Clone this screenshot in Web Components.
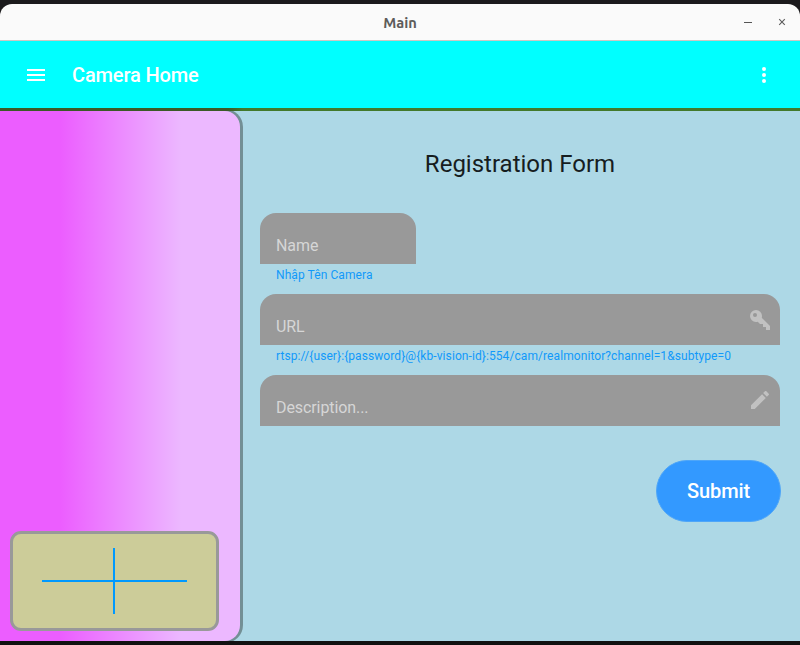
<!DOCTYPE html>
<html lang="vi">
<head>
<meta charset="utf-8">
<title>Main</title>
<style>
html,body{margin:0;height:100%;background:#1b1a1c;overflow:hidden}
</style>
</head>
<body>
<camera-window></camera-window>
<script>
function define(name, html, setup) {
  const t = document.createElement('template');
  t.innerHTML = html;
  customElements.define(name, class extends HTMLElement {
    constructor() {
      super();
      this.attachShadow({ mode: 'open' }).append(t.content.cloneNode(true));
    }
    connectedCallback() { if (setup) setup(this, this.shadowRoot); }
  });
}

const ICONS = {
  menu: 'M3,6H21V8H3V6M3,11H21V13H3V11M3,16H21V18H3V16Z',
  dots: 'M12,16A2,2 0 0,1 14,18A2,2 0 0,1 12,20A2,2 0 0,1 10,18A2,2 0 0,1 12,16M12,10A2,2 0 0,1 14,12A2,2 0 0,1 12,14A2,2 0 0,1 10,12A2,2 0 0,1 12,10M12,4A2,2 0 0,1 14,6A2,2 0 0,1 12,8A2,2 0 0,1 10,6A2,2 0 0,1 12,4Z',
  key: 'M22,18V22H18V19H15V16H12L9.74,13.74C9.19,13.91 8.61,14 8,14A6,6 0 0,1 2,8A6,6 0 0,1 8,2A6,6 0 0,1 14,8C14,8.61 13.91,9.19 13.74,9.74L22,18M7,5A2,2 0 0,0 5,7A2,2 0 0,0 7,9A2,2 0 0,0 9,7A2,2 0 0,0 7,5Z',
  pencil: 'M20.71,7.04C21.1,6.65 21.1,6 20.71,5.63L18.37,3.29C18,2.9 17.35,2.9 16.96,3.29L15.12,5.12L18.87,8.87M3,17.25V21H6.75L17.81,9.93L14.06,6.18L3,17.25Z'
};

define('md-icon', `
<style>:host{display:block;width:24px;height:24px}svg{display:block}</style>
<svg width="24" height="24" viewBox="0 0 24 24" fill="currentColor"><path/></svg>`,
(el, r) => r.querySelector('path').setAttribute('d', ICONS[el.getAttribute('name')]));

define('title-bar', `
<style>
:host{display:grid;grid-template-columns:1fr auto 1fr;align-items:center;height:36px;background:#fafafa;border-bottom:1px solid #ccc7c3;border-radius:12px 12px 0 0;color:#5e5c5a}
.t{grid-column:2;padding-top:2px;font:bold 14.67px/20px Ubuntu,"Noto Sans","Open Sans",sans-serif}
.c{display:flex;justify-content:flex-end;gap:26px;padding-right:14px}
svg{display:block}
</style>
<span class="t"><slot></slot></span>
<div class="c">
<svg width="8" height="8"><path d="M0 4.5H8" stroke="#555" fill="none"/></svg>
<svg width="8" height="8"><path d="M1.2 1.2L6.8 6.8M6.8 1.2L1.2 6.8" stroke="#5c5c5c" stroke-width="1.1" fill="none"/></svg>
</div>`);

define('app-bar', `
<style>
:host{display:flex;align-items:center;height:67px;padding:0 24px;box-sizing:border-box;background:#0ff;color:#fff;font:500 20px/24px Roboto,sans-serif}
.t{margin-left:24px;flex:1;white-space:nowrap;letter-spacing:-.13px}
</style>
<md-icon name="menu"></md-icon><span class="t"><slot></slot></span><md-icon name="dots"></md-icon>`);

define('add-tile', `
<style>
:host{display:grid;place-items:center;box-sizing:border-box;width:209px;height:100px;border:3px solid #999;border-radius:11px;background:#cc9}
svg{display:block}
</style>
<svg width="145" height="66"><path d="M0 33H145M72 0V66" stroke="#0099ff" stroke-width="2" fill="none"/></svg>`);

define('side-panel', `
<style>
:host{display:flex;flex-direction:column;justify-content:flex-end;box-sizing:border-box;width:243px;height:534px;margin-top:-2px;padding:0 0 10px 10px;border:solid #738f95;border-width:2px 3px 2px 0;border-radius:0 18px 18px 0;background:linear-gradient(90deg,#ec5dff 60px,#ecb8ff 181px)}
</style><slot></slot>`);

define('text-field', `
<style>
:host{display:block;height:81px;font-family:Roboto,sans-serif}
.box{display:flex;justify-content:space-between;height:51px;box-sizing:border-box;padding:13.5px 8px 0 16px;background:#999;border-radius:16px 16px 0 0;color:#d6d6d6;font-size:16px;line-height:20px}
.label{margin-top:9.5px;letter-spacing:-.09px}
md-icon{color:#c1c1c1}
md-icon[name=pencil]{margin-top:-.5px}
.help{padding:4px 16px 0;font-size:12px;line-height:14px;letter-spacing:.083px;color:#1199fa;white-space:nowrap}
</style>
<div class="box"><span class="label"><slot></slot></span></div>
<div class="help"><slot name="help"></slot></div>`,
(el, r) => {
  const n = el.getAttribute('icon');
  if (n) {
    const i = document.createElement('md-icon');
    i.setAttribute('name', n);
    r.querySelector('.box').append(i);
  }
});

define('pill-button', `
<style>
:host{display:flex;align-items:center;justify-content:center;box-sizing:border-box;width:125px;height:62px;border:1px solid #4fa6f8;border-radius:31px;background:#39f;color:#fff;font:500 20px/24px Roboto,sans-serif;letter-spacing:-.1px}
</style><span><slot></slot></span>`);

define('registration-form', `
<style>
:host{display:flex;flex-direction:column;flex:1;padding:37px 20px 0 17px;min-width:0}
h1{margin:0 0 33px;text-align:center;font:400 24px/32px Roboto,sans-serif;color:#161d1f}
.short{width:156px}
text-field:last-of-type{height:85px}
pill-button{align-self:flex-end;margin-right:-1px}
</style>
<h1>Registration Form</h1>
<text-field class="short">Name<span slot="help">Nhập Tên Camera</span></text-field>
<text-field icon="key">URL<span slot="help">rtsp://{user}:{password}@{kb-vision-id}:554/cam/realmonitor?channel=1&amp;subtype=0</span></text-field>
<text-field icon="pencil">Description...</text-field>
<pill-button>Submit</pill-button>`);

define('camera-window', `
<style>
:host{display:block;width:800px;height:645px;box-sizing:border-box;padding-top:4px;background:linear-gradient(#1b1a1c 50%,#111 50%)}
.rule{height:3px;background:linear-gradient(90deg,#3c5a28 228px,#427a2c 243px)}
.body{display:flex;height:530px;background:#add8e6;overflow:hidden}
</style>
<title-bar>Main</title-bar>
<app-bar>Camera Home</app-bar>
<div class="rule"></div>
<div class="body">
<side-panel><add-tile></add-tile></side-panel>
<registration-form></registration-form>
</div>`);
</script>
</body>
</html>
